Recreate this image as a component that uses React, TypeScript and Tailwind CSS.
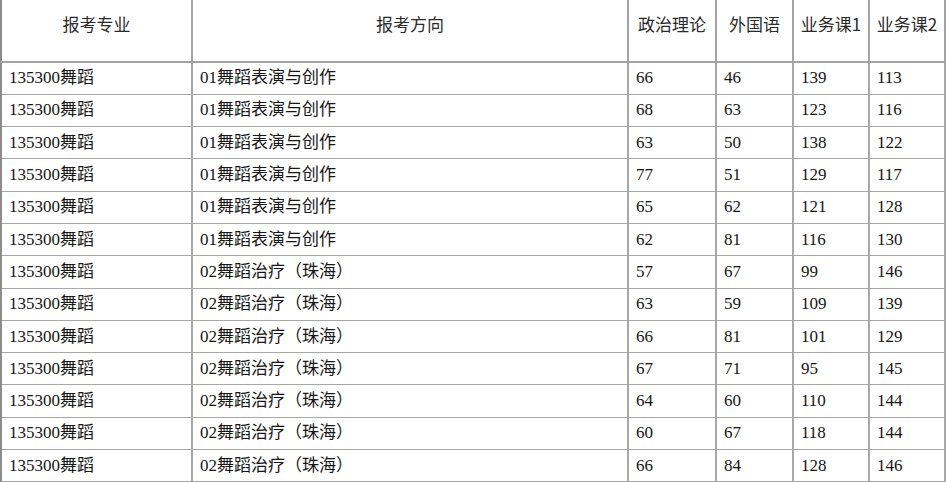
import React from "react";

const headers = ["报考专业", "报考方向", "政治理论", "外国语", "业务课1", "业务课2"];

const colWidths = ["w-[191px]", "w-[436px]", "w-[88px]", "w-[77px]", "w-[76px]", "w-[76px]"];

const rows = [
  ["135300舞蹈", "01舞蹈表演与创作", "66", "46", "139", "113"],
  ["135300舞蹈", "01舞蹈表演与创作", "68", "63", "123", "116"],
  ["135300舞蹈", "01舞蹈表演与创作", "63", "50", "138", "122"],
  ["135300舞蹈", "01舞蹈表演与创作", "77", "51", "129", "117"],
  ["135300舞蹈", "01舞蹈表演与创作", "65", "62", "121", "128"],
  ["135300舞蹈", "01舞蹈表演与创作", "62", "81", "116", "130"],
  ["135300舞蹈", "02舞蹈治疗（珠海）", "57", "67", "99", "146"],
  ["135300舞蹈", "02舞蹈治疗（珠海）", "63", "59", "109", "139"],
  ["135300舞蹈", "02舞蹈治疗（珠海）", "66", "81", "101", "129"],
  ["135300舞蹈", "02舞蹈治疗（珠海）", "67", "71", "95", "145"],
  ["135300舞蹈", "02舞蹈治疗（珠海）", "64", "60", "110", "144"],
  ["135300舞蹈", "02舞蹈治疗（珠海）", "60", "67", "118", "144"],
  ["135300舞蹈", "02舞蹈治疗（珠海）", "66", "84", "128", "146"],
];

export default function App() {
  return (
    <div className="w-[949px] h-[482px] overflow-hidden bg-white">
      <table className="w-[944px] table-fixed border-collapse border-l-2 border-l-[#8c8c8c] text-[#161616]">
        <colgroup>
          {colWidths.map((w, i) => (
            <col key={i} className={w} />
          ))}
        </colgroup>
        <thead>
          <tr className="h-[62px]">
            {headers.map((h) => (
              <th
                key={h}
                className="border-b-2 border-r-2 border-[#a3a3a3] px-1 pt-[13px] align-top text-center text-[17px] font-normal leading-[22px] text-[#2a2a2a] whitespace-nowrap"
                style={{ fontFamily: '"Noto Sans CJK SC", "Liberation Sans", sans-serif' }}
              >
                {h}
              </th>
            ))}
          </tr>
        </thead>
        <tbody>
          {rows.map((r, i) => (
            <tr key={i} className="h-[32.3px]">
              {r.map((c, j) => (
                <td
                  key={j}
                  className="border-b border-r-2 border-[#a8a8a8] pl-[7px] align-middle text-[17px] leading-[20px] whitespace-nowrap"
                  style={{ fontFamily: '"Liberation Serif", "Noto Sans CJK SC", serif' }}
                >
                  {c}
                </td>
              ))}
            </tr>
          ))}
        </tbody>
      </table>
    </div>
  );
}
